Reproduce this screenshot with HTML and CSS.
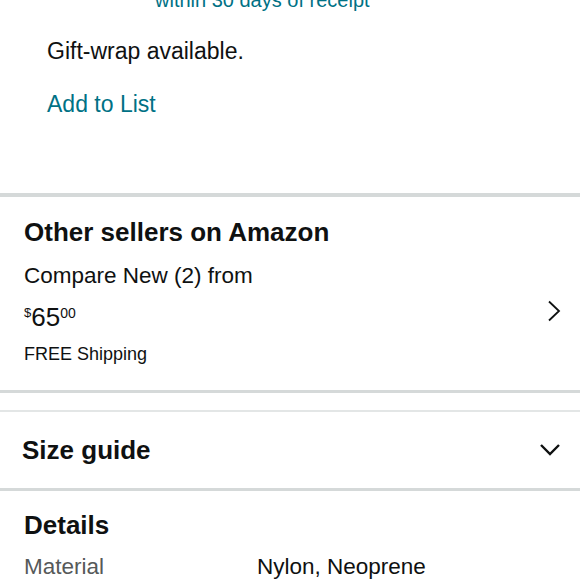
FILE: index.html
```html
<!DOCTYPE html>
<html lang="en">
<head>
  <meta charset="UTF-8">
  <meta name="viewport" content="width=device-width, initial-scale=1.0">
  <title>Product - Other sellers</title>
  <link rel="stylesheet" href="styles.css">
</head>
<body>

  <!-- Buy box tail -->
  <div class="buybox">
    <p class="returns">within 30 days of receipt</p>
    <p class="gift">Gift-wrap available.</p>
    <a href="javascript:void(0)" class="list-link">Add to List</a>
  </div>

  <!-- Other sellers -->
  <section class="card sellers">
    <h2>Other sellers on Amazon</h2>
    <p class="compare">Compare New (2) from</p>
    <div class="price-row">
      <div class="price">
        <span class="price-symbol">$</span><span class="price-whole">65</span><span class="price-fraction">00</span>
      </div>
      <svg class="chevron-right" width="14" height="22" viewBox="0 0 14 22">
        <path d="M2 1.5 L12 11 L2 20.5" fill="none" stroke="#0f1111" stroke-width="1.8"/>
      </svg>
    </div>
    <p class="shipping">FREE Shipping</p>
  </section>

  <!-- Size guide -->
  <section class="card accordion">
    <h2>Size guide</h2>
    <svg class="chevron-down" width="22" height="14" viewBox="0 0 22 14">
      <path d="M2 2 L11 11 L20 2" fill="none" stroke="#0f1111" stroke-width="2.4"/>
    </svg>
  </section>

  <!-- Details -->
  <section class="card details">
    <h2>Details</h2>
    <div class="detail-row">
      <span class="label">Material</span>
      <span class="value">Nylon, Neoprene</span>
    </div>
  </section>

</body>
</html>
```

FILE: styles.css
```css
body {
  font-family: "Liberation Sans", Arial, sans-serif;
  color: #0f1111;
  background-color: #fff;
  margin: 0;
  overflow: hidden;
}

p {
  margin: 0;
}

h2 {
  font-size: 26px;
  line-height: 30px;
  font-weight: bold;
  margin: 0;
}

.buybox {
  padding: 0 0 77px 47px;
}

.returns {
  margin: -11px 0 0 108px;
  font-size: 20px;
  line-height: 22px;
  color: #007185;
}

.gift {
  margin-top: 28px;
  font-size: 23px;
  line-height: 24px;
}

.list-link {
  display: block;
  margin-top: 29px;
  font-size: 23px;
  line-height: 24px;
  color: #007185;
  text-decoration: none;
}

.card {
  background-color: #fff;
}

.sellers {
  border-top: 4px solid #d5d9d9;
  border-bottom: 3px solid #d5d9d9;
  padding: 20px 19px 25px 24px;
  margin-bottom: 17px;
}

.compare {
  margin-top: 16px;
  font-size: 22.5px;
  line-height: 26px;
}

.price-row {
  display: flex;
  justify-content: space-between;
  align-items: flex-start;
  margin-top: 16px;
}

.price {
  display: flex;
  align-items: flex-start;
}

.price-symbol {
  font-size: 13px;
  line-height: 13px;
  margin-top: 1px;
}

.price-whole {
  font-size: 26px;
  line-height: 24px;
}

.price-fraction {
  font-size: 14px;
  line-height: 14px;
  margin-top: 1px;
}

.chevron-right {
  margin-top: -5px;
}

.shipping {
  margin-top: 14px;
  font-size: 18px;
  line-height: 22px;
}

.accordion {
  display: flex;
  justify-content: space-between;
  align-items: center;
  border-top: 2px solid #e3e6e6;
  border-bottom: 3px solid #d5d9d9;
  padding: 23px 19px 23px 22px;
}

.details {
  padding: 19px 24px 0 24px;
}

.detail-row {
  display: grid;
  grid-template-columns: 233px 1fr;
  margin-top: 14px;
  font-size: 22.5px;
  line-height: 26px;
}

.label {
  color: #565959;
}
```
